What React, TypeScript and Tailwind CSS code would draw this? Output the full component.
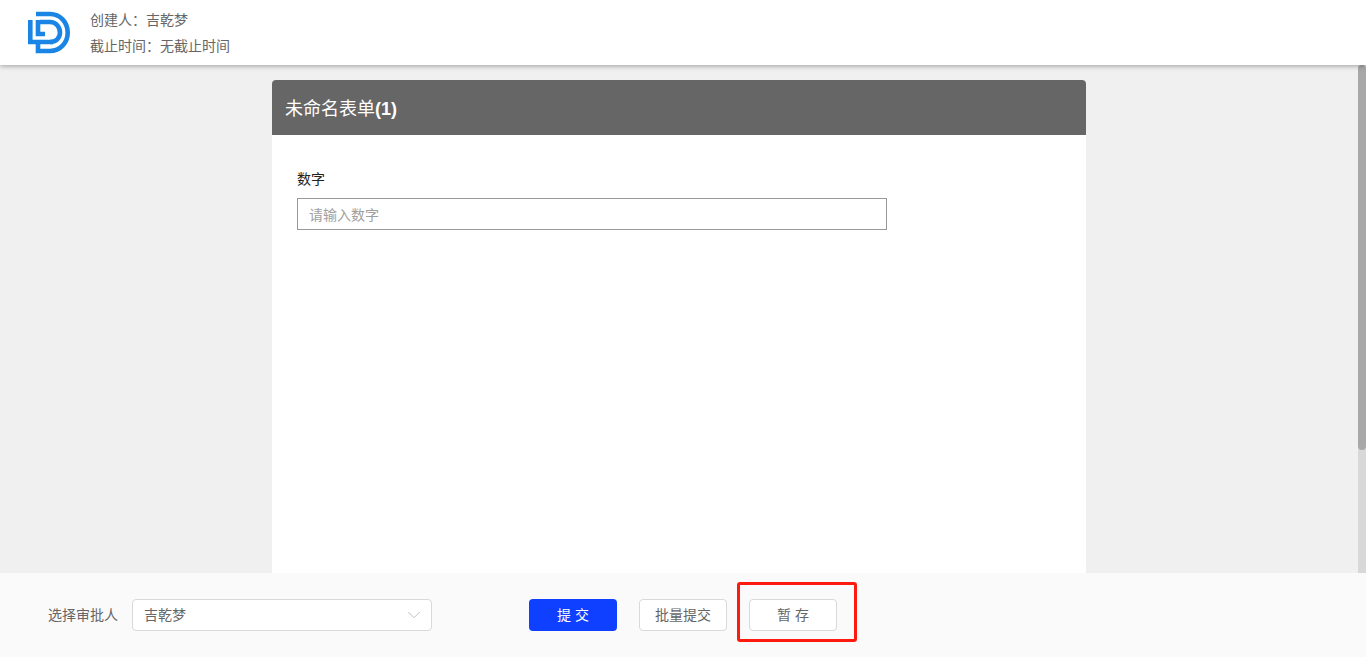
import React from "react"
import { ChevronDown } from "lucide-react"

const font = { fontFamily: '"Liberation Sans", "Noto Sans CJK SC", sans-serif' }

const Logo = () => (
  <svg width="44" height="45" viewBox="0 0 44 45" fill="none" stroke="#1a85e5" strokeWidth="4.6">
    <path d="M2.3 10V32H25" />
    <path d="M10 10V24H17" />
    <path d="M8 4H22C32 4 39.7 12 39.7 22.5C39.7 33 32 41 22 41H10V34" />
    <path d="M12 12H22C28 12 32 17 32 22.5C32 28 28 32 22 32" />
  </svg>
)

const App = () => {
  return (
    <div className="h-[657px] flex flex-col overflow-hidden bg-[#f0f0f0]" style={font}>
      <header className="relative z-10 h-[65px] shrink-0 bg-white flex items-center pl-[28px] shadow-[0_1px_5px_rgba(0,0,0,0.35)]">
        <Logo />
        <div className="ml-[18px] text-sm text-[#666] leading-[26px]">
          <div>创建人：吉乾梦</div>
          <div>截止时间：无截止时间</div>
        </div>
      </header>

      <div className="flex-1 flex min-h-0">
        <main className="flex-1 min-w-0 pt-[15px]">
          <div className="mx-auto w-[814px] h-full bg-white rounded-t">
            <div className="h-[55px] bg-[#666] rounded-t flex items-center pt-[2px] px-[13px] text-lg text-white">
              未命名表单<span className="font-bold">(1)</span>
            </div>
            <div className="pt-[34px] px-[25px]">
              <label className="block text-sm leading-5 text-[#222]">数字</label>
              <input
                placeholder="请输入数字"
                className="mt-[9px] block w-[590px] h-8 border border-[#999] pt-[2px] px-[11px] text-sm outline-none placeholder:text-[#a0a0a0]"
              />
            </div>
          </div>
        </main>
        <div className="w-2 shrink-0 bg-[#d8d8d8]">
          <div className="h-[385px] bg-[#a8a8a8] rounded-full" />
        </div>
      </div>

      <footer className="h-[84px] shrink-0 bg-[#fafafa] flex items-center pl-12 text-[#666]">
        <span className="text-sm w-[84px]">选择审批人</span>
        <div className="w-[300px] h-8 bg-white border border-[#d9d9d9] rounded flex items-center justify-between pl-[11px] pr-[6px] text-sm">
          吉乾梦
          <ChevronDown size={22} strokeWidth={1} className="text-[#bbb]" />
        </div>
        <button className="ml-[97px] w-[88px] h-8 rounded bg-[#1040ff] text-white text-sm">提 交</button>
        <button className="ml-[22px] w-[88px] h-8 rounded bg-white border border-[#d9d9d9] text-sm">批量提交</button>
        <div className="relative ml-[22px]">
          <button className="w-[88px] h-8 block rounded bg-white border border-[#d9d9d9] text-sm">暂 存</button>
          <div className="absolute -left-[12px] -right-[20px] -top-[17px] -bottom-[11px] border-[3px] border-[#ff1a10] rounded-[3px]" />
        </div>
      </footer>
    </div>
  )
}

export default App
